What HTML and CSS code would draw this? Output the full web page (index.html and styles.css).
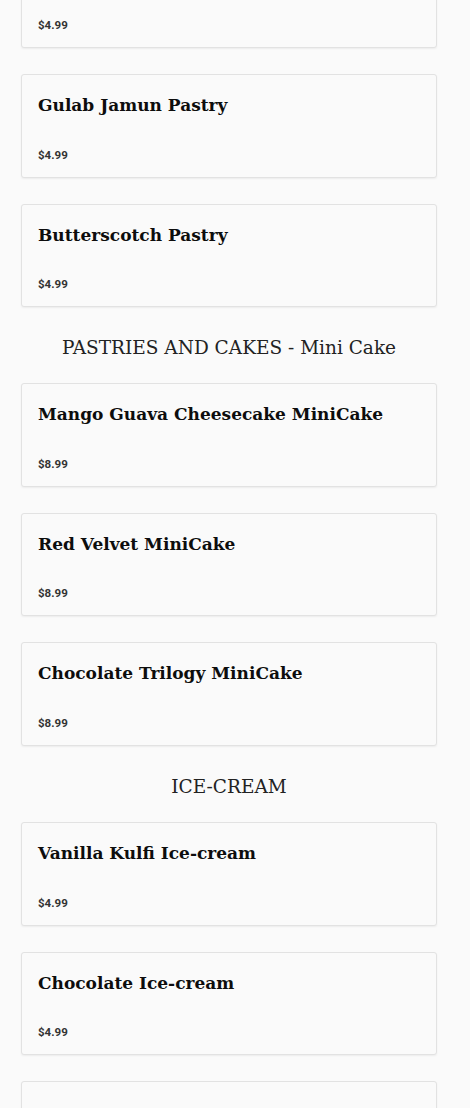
FILE: index.html
```html
<!DOCTYPE html>
<html lang="en">
<head>
  <meta charset="UTF-8">
  <meta name="viewport" content="width=device-width, initial-scale=1.0">
  <title>Menu</title>
  <link rel="stylesheet" href="styles.css">
</head>
<body>
  <div class="menu">
    <!-- scrolled: the first card's title sits above the fold -->
    <div class="item-card">
      <p class="price">$4.99</p>
    </div>
    <div class="item-card">
      <h3>Gulab Jamun Pastry</h3>
      <p class="price">$4.99</p>
    </div>
    <div class="item-card">
      <h3>Butterscotch Pastry</h3>
      <p class="price">$4.99</p>
    </div>

    <h2 class="category">PASTRIES AND CAKES - Mini Cake</h2>
    <div class="item-card">
      <h3>Mango Guava Cheesecake MiniCake</h3>
      <p class="price">$8.99</p>
    </div>
    <div class="item-card">
      <h3>Red Velvet MiniCake</h3>
      <p class="price">$8.99</p>
    </div>
    <div class="item-card">
      <h3>Chocolate Trilogy MiniCake</h3>
      <p class="price">$8.99</p>
    </div>

    <h2 class="category">ICE-CREAM</h2>
    <div class="item-card">
      <h3>Vanilla Kulfi Ice-cream</h3>
      <p class="price">$4.99</p>
    </div>
    <div class="item-card">
      <h3>Chocolate Ice-cream</h3>
      <p class="price">$4.99</p>
    </div>
    <!-- next card starts right at the bottom edge -->
    <div class="item-card"></div>
  </div>
</body>
</html>
```

FILE: styles.css
```css
/* Menu list */
body {
  margin: 0;
  background-color: #fafafa;
  font-family: "DejaVu Serif", serif;
  color: #111;
  overflow: hidden;
}

.menu {
  width: 416px;
  margin: -55.6px 0 0 21px;
  display: flex;
  flex-direction: column;
  gap: 26px;
}

.item-card {
  background-color: #fafafa;
  border: 1px solid #e2e2e2;
  border-radius: 3px;
  box-shadow: 0 1px 2px rgba(0, 0, 0, 0.06);
  padding: 16px 16px 14px;
  height: 103.6px;
  box-sizing: border-box;
  flex-shrink: 0;
  display: flex;
  flex-direction: column;
}

.item-card h3 {
  margin: 0;
  font-size: 17px;
  line-height: 28px;
  font-weight: bold;
  color: #0d0d0d;
}

.item-card .price {
  margin: auto 0 0;
  font-family: Roboto, "Liberation Sans", sans-serif;
  font-size: 11.5px;
  line-height: 16px;
  font-weight: bold;
  color: #333;
}

.category {
  margin: 0 0 -6px;
  text-align: center;
  font-size: 18.5px;
  font-weight: normal;
  line-height: 30px;
  color: #222;
}
```
